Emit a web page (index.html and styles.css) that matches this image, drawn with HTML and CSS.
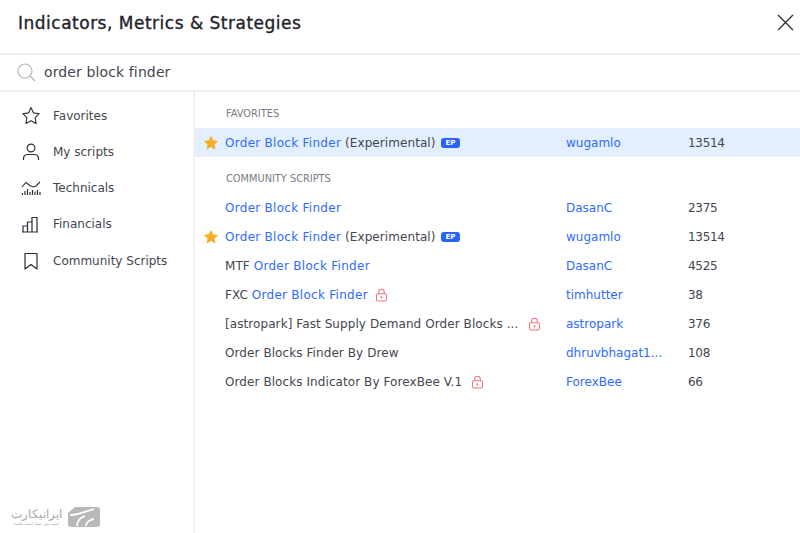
FILE: index.html
```html
<!DOCTYPE html>
<html lang="en">
<head>
<meta charset="utf-8">
<title>Indicators, Metrics &amp; Strategies</title>
<link rel="stylesheet" href="styles.css">
</head>
<body>
<svg class="defs" width="0" height="0" aria-hidden="true">
  <defs>
    <symbol id="fav" viewBox="0 0 14 14"><path d="M7 .8l1.900 3.900 4.300.6-3.100 3 .7 4.300L7 10.600 3.200 12.600l.7-4.300-3.100-3 4.300-.6z" fill="#f9ac25"/></symbol>
    <symbol id="lock" viewBox="0 0 14 14"><g fill="none" stroke="#f2757d" stroke-width="1.100"><rect x="1.600" y="5.600" width="10.800" height="7.800" rx="1.600"/><path d="M4 5.600V3.800a3 3 0 0 1 6 0v1.800"/></g><circle cx="7" cy="9.500" r="1.200" fill="#f2757d"/></symbol>
  </defs>
</svg>
<div class="dialog">
  <header class="title-bar">
    <h1 class="title">Indicators, Metrics &amp; Strategies</h1>
    <svg class="close" viewBox="0 0 16 16"><path d="M1 1l14 14M15 1L1 15" fill="none" stroke="#2a2e39" stroke-width="1.200"/></svg>
  </header>
  <div class="search">
    <svg class="search-icon" viewBox="0 0 19 19"><g fill="none" stroke="#b2b5be" stroke-width="1.200"><circle cx="8" cy="8" r="7"/><path d="M13 13l5 5"/></g></svg>
    <span class="query">order block finder</span>
  </div>
  <div class="body">
    <nav class="side">
      <div class="side-item">
        <svg class="side-icon" viewBox="0 0 20 20"><path d="M10 1.600l2.500 5.300 5.800.8-4.200 4 1 5.800-5.100-2.800-5.100 2.800 1-5.800-4.200-4 5.800-.8z" fill="none" stroke="#2a2e39" stroke-width="1.100" stroke-linejoin="round"/></svg>
        <span>Favorites</span>
      </div>
      <div class="side-item">
        <svg class="side-icon" viewBox="0 0 20 20"><g fill="none" stroke="#2a2e39" stroke-width="1.200"><circle cx="10" cy="6" r="3.900"/><path d="M2.500 18v-1.500c0-2.500 2-4 4.500-4h6c2.500 0 4.500 1.500 4.500 4V18"/></g></svg>
        <span>My scripts</span>
      </div>
      <div class="side-item">
        <svg class="side-icon" viewBox="0 0 20 20"><g fill="none" stroke="#2a2e39"><path d="M1 9l4-4.500 4 3 3 1.500 3-1 4-4" stroke-width="1.100"/><path d="M1.500 15v2M4 13v4M6.500 11v6M9 14v3M11.500 12v5M14 13.500V17M16.500 12v5M19 14v3" stroke-width="1.200"/></g></svg>
        <span>Technicals</span>
      </div>
      <div class="side-item">
        <svg class="side-icon" viewBox="0 0 20 20"><g fill="none" stroke="#2a2e39" stroke-width="1.200"><path d="M2 18v-6h4.500v6zM6.500 18V8H11v10zM11 18V3.500h5V18zM1 18h16"/></g></svg>
        <span>Financials</span>
      </div>
      <div class="side-item">
        <svg class="side-icon" viewBox="0 0 20 20"><path d="M4 2.500h12V18l-6-4.500L4 18z" fill="none" stroke="#2a2e39" stroke-width="1.200" stroke-linejoin="round"/></svg>
        <span>Community Scripts</span>
      </div>
      <div class="brand">
        <div class="brand-text">
          <span class="brand-name" lang="fa" dir="rtl">ایرانیکارت</span>
          <span class="brand-sub" lang="fa" dir="rtl">امنیت پول شما، امنیت ماست</span>
        </div>
        <svg class="brand-logo" viewBox="0 0 32 20"><path d="M7 0h22a3 3 0 0 1 3 3v14a3 3 0 0 1-3 3H3a3 3 0 0 1-3-3V6z" fill="#b8b8b8"/><path d="M2 8c8 0 14-3 24-6M9 19c0-5 2-8 8-10M18 19c0-3 3-6 8-7" fill="none" stroke="#fff" stroke-width="1.800"/></svg>
      </div>
    </nav>
    <main class="list">
      <div class="section first">FAVORITES</div>
      <div class="row selected">
        <span class="star"><svg class="star-icon"><use href="#fav"/></svg></span>
        <span class="name"><b class="hl">Order Block Finder</b> (Experimental) <span class="ep">EP</span></span>
        <span class="author">wugamlo</span>
        <span class="count">13514</span>
      </div>
      <div class="section">COMMUNITY SCRIPTS</div>
      <div class="row">
        <span class="star"></span>
        <span class="name"><b class="hl">Order Block Finder</b></span>
        <span class="author">DasanC</span>
        <span class="count">2375</span>
      </div>
      <div class="row">
        <span class="star"><svg class="star-icon"><use href="#fav"/></svg></span>
        <span class="name"><b class="hl">Order Block Finder</b> (Experimental) <span class="ep">EP</span></span>
        <span class="author">wugamlo</span>
        <span class="count">13514</span>
      </div>
      <div class="row">
        <span class="star"></span>
        <span class="name">MTF <b class="hl">Order Block Finder</b></span>
        <span class="author">DasanC</span>
        <span class="count">4525</span>
      </div>
      <div class="row">
        <span class="star"></span>
        <span class="name">FXC <b class="hl">Order Block Finder</b><svg class="lock"><use href="#lock"/></svg></span>
        <span class="author">timhutter</span>
        <span class="count">38</span>
      </div>
      <div class="row">
        <span class="star"></span>
        <span class="name"><span class="clip">[astropark] Fast Supply Demand Order Blocks ...</span><svg class="lock"><use href="#lock"/></svg></span>
        <span class="author">astropark</span>
        <span class="count">376</span>
      </div>
      <div class="row">
        <span class="star"></span>
        <span class="name">Order Blocks Finder By Drew</span>
        <span class="author">dhruvbhagat1...</span>
        <span class="count">108</span>
      </div>
      <div class="row">
        <span class="star"></span>
        <span class="name">Order Blocks Indicator By ForexBee V.1<svg class="lock wide"><use href="#lock"/></svg></span>
        <span class="author">ForexBee</span>
        <span class="count">66</span>
      </div>
    </main>
  </div>
</div>
</body>
</html>
```
FILE: styles.css
```css
* { box-sizing: border-box; }
html, body { margin: 0; height: 100%; }
body { background: #fff; color: #434651; font-family: "DejaVu Sans", sans-serif; font-size: 12px; overflow: hidden; }
.defs { position: absolute; }
.dialog { width: 800px; height: 533px; display: flex; flex-direction: column; }
.title-bar { height: 55px; flex: none; display: flex; align-items: center; justify-content: space-between; padding: 0 6px 8px 18px; border-bottom: 2px solid #eeeef2; }
.title { margin: 0; font-size: 17px; font-weight: 400; color: #1f222b; letter-spacing: .5px; -webkit-text-stroke: .35px #1f222b; }
.close { width: 17px; height: 17px; }
.search { height: 37px; flex: none; display: flex; align-items: center; gap: 8px; padding: 0 0 1px 17px; border-bottom: 2px solid #eeeef2; }
.search-icon { width: 19px; height: 19px; }
.query { font-size: 14px; letter-spacing: .12px; color: #434651; }
.body { flex: 1; display: flex; min-height: 0; }
.side { width: 195px; flex: none; border-right: 2px solid #f0f0f3; padding-top: 5.500px; display: flex; flex-direction: column; position: relative; }
.side-item { height: 36.250px; display: flex; align-items: center; gap: 12px; padding-left: 21px; }
.side-icon { width: 20px; height: 20px; flex: none; }
.brand { margin-top: auto; height: 32px; display: flex; align-items: center; gap: 6px; padding-left: 10px; }
.brand-text { display: flex; flex-direction: column; align-items: center; width: 52px; color: #a9a9a9; font-family: "Noto Sans", sans-serif; white-space: nowrap; }
.brand-name { font-size: 12px; line-height: 14px; }
.brand-sub { font-size: 4px; line-height: 6px; }
.brand-logo { width: 32px; height: 20px; }
.list { flex: 1; display: flex; flex-direction: column; min-width: 0; }
.section { height: 36px; display: flex; align-items: center; padding: 6px 0 0 31px; font-size: 9.800px; color: #787b86; }
.section.first { padding-top: 6px; }
.row { height: 29px; flex: none; display: grid; grid-template-columns: 30px 341px 122px 1fr; align-items: center; }
.row.selected { background: #e3effd; }
.star { display: flex; padding-left: 8px; }
.star-icon { width: 16px; height: 16px; }
.name { display: flex; align-items: center; white-space: pre; letter-spacing: .08px; }
.hl { font-weight: 400; color: #2f6bff; letter-spacing: .28px; }
.ep { background: #2962ff; color: #fff; font-size: 7px; font-weight: 700; border-radius: 3px; padding: 0 4px; height: 10px; line-height: 10px; margin-left: 2px; }
.clip { width: 296px; overflow: hidden; }
.lock { width: 13px; height: 14px; margin-left: 7px; }
.lock.wide { margin-left: 9px; }
.author { color: #2f6bff; }
.count { letter-spacing: -.3px; }
```
